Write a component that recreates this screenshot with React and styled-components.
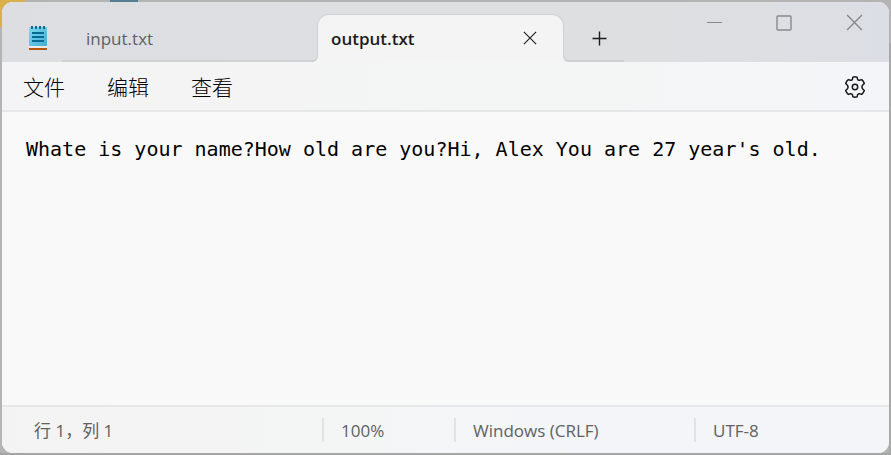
import React, { useState } from "react";
import styled, { createGlobalStyle } from "styled-components";

const GlobalStyle = createGlobalStyle`
  *, *::before, *::after { box-sizing: border-box; }
  html, body { margin: 0; }
  body {
    font-family: "Open Sans", "Noto Sans CJK SC", sans-serif;
    background: #b9b9b9;
  }
  button { font: inherit; color: inherit; background: none; border: 0; padding: 0; }
  svg { display: block; }
`;

const Desktop = styled.div`
  height: 100vh;
  padding: 2px;
  background:
    linear-gradient(#d9b04c, #d9b04c) 0 0 / 25px 27px no-repeat,
    linear-gradient(#557f90, #557f90) 110px 0 / 28px 2px no-repeat,
    linear-gradient(#a5a5a5, #a5a5a5) 0 100% / 100% 2px no-repeat,
    linear-gradient(#a8a8a8, #a8a8a8) 100% 43px / 2px 100% no-repeat,
    #b4b4b4;
`;

const Window = styled.main`
  height: 100%;
  display: flex;
  flex-direction: column;
  overflow: hidden;
  border-radius: 11px;
  background: #f9f9f9;
`;

const TitleBar = styled.header`
  flex: none;
  height: 60px;
  display: flex;
  align-items: flex-end;
  background: linear-gradient(90deg, #dddee2, #dedfe1 40%, #dddfe1 75%, #dbdee4);
`;

const AppIcon = styled.div`
  width: 60px;
  height: 60px;
  padding: 23px 0 0 27px;
`;

const TabList = styled.div`
  display: flex;
  align-items: flex-end;
`;

const TabItem = styled.div`
  position: relative;
  height: 48px;
  display: flex;
  align-items: flex-start;
  width: ${(p) => (p.$active ? 247 : 255)}px;
  color: ${(p) => (p.$active ? "#1c1c1c" : "#5f6062")};
  font-weight: ${(p) => (p.$active ? 600 : 400)};
  background: ${(p) => (p.$active ? "#f4f4f4" : "transparent")};
  border: solid #cfd0d3;
  border-width: ${(p) => (p.$active ? "1px 1px 0" : "0 0 2px")};
  border-radius: ${(p) => (p.$active ? "12px 12px 0 0" : "0")};

  &::before, &::after {
    content: "";
    display: ${(p) => (p.$active ? "block" : "none")};
    position: absolute;
    bottom: 0;
    width: 6px;
    height: 6px;
    border-bottom: 2px solid #cfd0d3;
    background: #dedfe2;
  }
  &::before {
    left: -6px;
    border-right: 1px solid #cfd0d3;
    border-bottom-right-radius: 6px;
    box-shadow: 2px 1px 0 #f4f4f4;
  }
  &::after {
    right: -6px;
    border-left: 1px solid #cfd0d3;
    border-bottom-left-radius: 6px;
    box-shadow: -2px 1px 0 #f4f4f4;
  }
`;

const TabButton = styled.button`
  flex: 1;
  height: ${(p) => (p.$active ? 46 : 48)}px;
  padding-left: ${(p) => (p.$active ? 13 : 24)}px;
  font-size: 17px;
  text-align: left;
`;

const TabClose = styled.button`
  width: 40px;
  height: 46px;
  margin-right: 13px;
  display: grid;
  place-items: center;
  color: #1b1b1b;
`;

const NewTab = styled.button`
  width: 60px;
  height: 48px;
  display: grid;
  place-items: center;
  padding: 4px 0 0 12px;
  border-bottom: 2px solid #cfd0d3;
  color: #1b1b1b;
`;

const Controls = styled.div`
  margin-left: auto;
  align-self: flex-start;
  display: flex;
`;

const ControlButton = styled.button`
  width: 70px;
  height: 41px;
  display: grid;
  place-items: center;
  color: #868a8c;
`;

const MenuBar = styled.nav`
  flex: none;
  height: 50px;
  display: flex;
  align-items: center;
  padding: 0 22px 0 21px;
  gap: 42px;
  border-bottom: 2px solid #e6e7e8;
  background: linear-gradient(90deg, #f4f4f6, #f4f4f4 30%, #f4f6f6 70%, #f4f5f8);
`;

const MenuButton = styled.button`
  font-family: "Noto Sans CJK SC", sans-serif;
  font-size: 21px;
  font-weight: 300;
  line-height: 30px;
  color: #000;
`;

const SettingsButton = styled.button`
  margin-left: auto;
  padding-top: 2px;
  color: #1b1b1b;
`;

const Editor = styled.textarea`
  flex: 1;
  min-height: 0;
  width: 100%;
  display: block;
  padding: 24px;
  border: 0;
  outline: 0;
  resize: none;
  background: #f9f9f9;
  color: #000;
  font-family: "DejaVu Sans Mono", monospace;
  font-size: 20px;
  line-height: 26px;
`;

const StatusBar = styled.footer`
  flex: none;
  height: 48px;
  display: grid;
  grid-template-columns: 320px 132px 240px 1fr;
  align-items: center;
  border-top: 2px solid #e6e7e8;
  background: linear-gradient(90deg, #f3f3f4, #f4f4f4 25%, #f4f6f6 40%, #f3f5f8 65%);
  color: #606162;
  font-size: 17px;
`;

const StatusItem = styled.span`
  height: 24px;
  padding-left: ${(p) => (p.$first ? 32 : 17)}px;
  border-left: ${(p) => (p.$first ? "0" : "2px solid #e1e2e4")};
  line-height: 26px;
  white-space: nowrap;
`;

function NotepadIcon() {
  return (
    <svg width="18" height="26" viewBox="0 0 18 26" aria-hidden="true">
      <defs>
        <linearGradient id="paper" x1="0" y1="0" x2="1" y2="1">
          <stop offset="0" stopColor="#7bdcf0" />
          <stop offset="1" stopColor="#43acd0" />
        </linearGradient>
      </defs>
      <rect y="20" width="18" height="4" fill="#eceae8" />
      <rect y="23" width="18" height="2" fill="#b4560c" />
      <rect y="2" width="18" height="19" rx="1" fill="url(#paper)" />
      <path d="M3 1v3M7 1v3M11 1v3M15 1v3" stroke="#17698a" strokeWidth="2" />
      <path d="M3 8h12M3 12h12M3 16h12" stroke="#066b92" strokeWidth="2" />
    </svg>
  );
}

function Cross({ size }) {
  return (
    <svg width={size} height={size} viewBox="0 0 16 16" aria-hidden="true">
      <path d="M1 1l14 14M15 1L1 15" stroke="currentColor" strokeWidth="1.3" fill="none" />
    </svg>
  );
}

function Gear() {
  return (
    <svg width="24" height="24" viewBox="0 0 24 24" fill="none" stroke="currentColor" strokeWidth="1.5" strokeLinejoin="round" aria-hidden="true">
      <path d="M9.9 2.2Q12 1.5 14.1 2.2L14.6 4.3Q15 5.6 16.5 5.3L18.7 4.6Q20.5 6 21.3 8.5L19.5 10.3Q18.3 12 19.5 13.7L21.3 15.5Q20.5 18 18.7 19.4L16.5 18.7Q15 18.4 14.6 19.7L14.1 21.8Q12 22.5 9.9 21.8L9.4 19.7Q9 18.4 7.5 18.7L5.3 19.4Q3.5 18 2.7 15.5L4.5 13.7Q5.7 12 4.5 10.3L2.7 8.5Q3.5 6 5.3 4.6L7.5 5.3Q9 5.6 9.4 4.3Z" />
      <circle cx="12" cy="12" r="2.7" />
    </svg>
  );
}

const menus = ["文件", "编辑", "查看"];

export default function App() {
  const [text, setText] = useState(
    "Whate is your name?How old are you?Hi, Alex You are 27 year's old."
  );
  return (
    <Desktop>
      <GlobalStyle />
      <Window>
        <TitleBar>
          <AppIcon><NotepadIcon /></AppIcon>
          <TabList>
            <TabItem><TabButton>input.txt</TabButton></TabItem>
            <TabItem $active>
              <TabButton $active>output.txt</TabButton>
              <TabClose aria-label="关闭标签页"><Cross size={14} /></TabClose>
            </TabItem>
            <NewTab aria-label="新建标签页">
              <svg width="16" height="16" viewBox="0 0 16 16" aria-hidden="true">
                <path d="M7.5 0.5v14M0.5 7.5h14" stroke="currentColor" strokeWidth="1.4" />
              </svg>
            </NewTab>
          </TabList>
          <Controls>
            <ControlButton aria-label="最小化">
              <svg width="16" height="16" viewBox="0 0 16 16" aria-hidden="true">
                <path d="M1 7.5h15" stroke="currentColor" />
              </svg>
            </ControlButton>
            <ControlButton aria-label="最大化">
              <svg width="16" height="16" viewBox="0 0 16 16" aria-hidden="true">
                <rect x="1" y="1" width="14" height="14" rx="1" fill="none" stroke="currentColor" strokeWidth="1.4" />
              </svg>
            </ControlButton>
            <ControlButton aria-label="关闭"><Cross size={17} /></ControlButton>
          </Controls>
        </TitleBar>
        <MenuBar>
          {menus.map((m) => <MenuButton key={m}>{m}</MenuButton>)}
          <SettingsButton aria-label="设置"><Gear /></SettingsButton>
        </MenuBar>
        <Editor aria-label="文本编辑器" spellCheck={false} value={text} onChange={(e) => setText(e.target.value)} />
        <StatusBar>
          <StatusItem $first>行 1，列 1</StatusItem>
          <StatusItem>100%</StatusItem>
          <StatusItem>Windows (CRLF)</StatusItem>
          <StatusItem>UTF-8</StatusItem>
        </StatusBar>
      </Window>
    </Desktop>
  );
}
